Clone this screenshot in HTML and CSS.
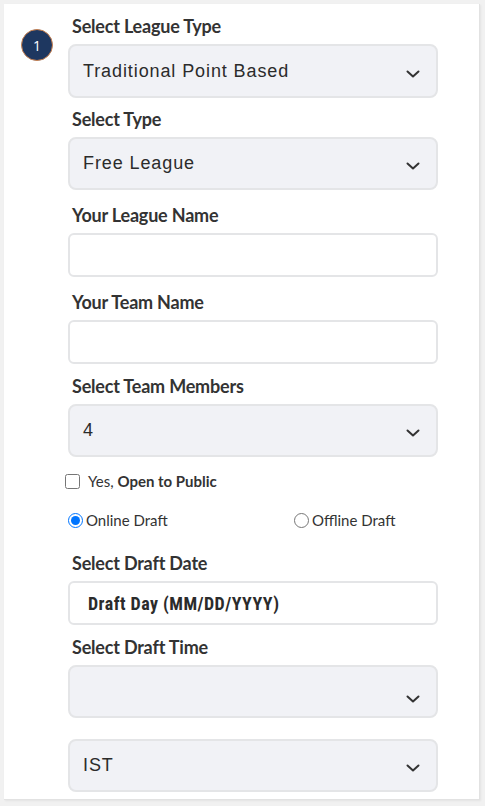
FILE: index.html
```html
<!DOCTYPE html>
<html lang="en">
<head>
<meta charset="utf-8">
<title>Create League</title>
<link rel="stylesheet" href="styles.css">
</head>
<body>
<div class="card">
  <div class="step">
    <div class="badge">1</div>
  </div>
  <form class="form">
    <div class="group tight">
      <label class="label">Select League Type</label>
      <div class="select tall"><span class="value">Traditional Point Based</span><svg class="chev" viewBox="0 0 14 8"><path d="M1.5 1.5 L7 6.5 L12.5 1.5"/></svg></div>
    </div>
    <div class="group loose">
      <label class="label">Select Type</label>
      <div class="select"><span class="value">Free League</span><svg class="chev" viewBox="0 0 14 8"><path d="M1.5 1.5 L7 6.5 L12.5 1.5"/></svg></div>
    </div>
    <div class="group loose">
      <label class="label">Your League Name</label>
      <div class="input"></div>
    </div>
    <div class="group snug">
      <label class="label">Your Team Name</label>
      <div class="input"></div>
    </div>
    <div class="group">
      <label class="label">Select Team Members</label>
      <div class="select"><span class="value">4</span><svg class="chev" viewBox="0 0 14 8"><path d="M1.5 1.5 L7 6.5 L12.5 1.5"/></svg></div>
    </div>
    <div class="check-row">
      <input type="checkbox" class="box">
      <span class="check-text">Yes, <b>Open to Public</b></span>
    </div>
    <div class="radio-row">
      <div class="radio"><input type="radio" name="draft" checked><span>Online Draft</span></div>
      <div class="radio"><input type="radio" name="draft"><span>Offline Draft</span></div>
    </div>
    <div class="group snug">
      <label class="label">Select Draft Date</label>
      <div class="input date"><span class="date-text">Draft Day (MM/DD/YYYY)</span></div>
    </div>
    <div class="group">
      <label class="label">Select Draft Time</label>
      <div class="select empty"><span class="value"></span><svg class="chev" viewBox="0 0 14 8"><path d="M1.5 1.5 L7 6.5 L12.5 1.5"/></svg></div>
    </div>
    <div class="group tz">
      <div class="select"><span class="value">IST</span><svg class="chev" viewBox="0 0 14 8"><path d="M1.5 1.5 L7 6.5 L12.5 1.5"/></svg></div>
    </div>
  </form>
</div>
</body>
</html>
```
FILE: styles.css
```css
* { box-sizing: border-box; }
html, body { margin: 0; padding: 0; }
body {
  background: #f1f1f1;
  font-family: Lato, "Liberation Sans", sans-serif;
  color: #333;
  height: 806px;
  overflow: hidden;
}
.card {
  margin: 4px 5px 0 4px;
  width: 476px;
  height: 796px;
  background: #fff;
  border-right: 1px solid #e2e2e2;
  border-bottom: 1px solid #e2e2e2;
  box-shadow: 1px 1px 2px rgba(0,0,0,0.06);
  display: flex;
  align-items: flex-start;
  padding-top: 11px;
}
.step {
  width: 64px;
  flex: none;
  padding: 14px 0 0 17px;
}
.badge {
  width: 32px;
  height: 32px;
  border-radius: 50%;
  background: #1e3760;
  border: 1.5px solid #c98150;
  color: #fff;
  font-family: "Open Sans", "Liberation Sans", sans-serif;
  font-size: 14px;
  display: flex;
  align-items: center;
  justify-content: center;
}
.form {
  width: 370px;
  flex: none;
  display: flex;
  flex-direction: column;
}
.form > * { flex: none; }
.group { margin-bottom: 12px; }
.group.tight { margin-bottom: 10px; }
.group.loose { margin-bottom: 14px; }
.group.snug { margin-bottom: 11px; }
.label {
  display: block;
  font-weight: 700;
  font-size: 18px;
  line-height: 22px;
  color: #333;
  margin-bottom: 7px;
  padding-left: 4px;
  letter-spacing: -0.2px;
}
.select {
  height: 53px;
  border: 2px solid #e4e5e7;
  border-radius: 8px;
  background: #f1f2f6;
  display: flex;
  align-items: center;
  padding: 0 16px 0 13px;
}
.select.tall { height: 54px; }
.value {
  flex: 1;
  font-family: "Liberation Sans", Arial, sans-serif;
  font-size: 18px;
  letter-spacing: 0.9px;
  color: #2b2b2b;
}
.chev {
  width: 14px;
  height: 8px;
  margin-top: 5px;
  fill: none;
  stroke: #333;
  stroke-width: 2;
  stroke-linecap: round;
  stroke-linejoin: round;
}
.empty .chev { margin-top: 14px; }
.input {
  height: 44px;
  border: 2px solid #e4e5e7;
  border-radius: 6px;
  background: #fff;
  display: flex;
  align-items: center;
}
.date { padding-left: 18px; }
.date-text {
  font-family: "Liberation Sans Narrow", "Roboto Condensed", Roboto, sans-serif;
  font-stretch: condensed;
  font-weight: 700;
  font-size: 18px;
  letter-spacing: 0.45px;
  color: #2b2b2b;
}
.check-row {
  display: flex;
  align-items: center;
  margin: 0 0 0 -3px;
  height: 24px;
}
.box {
  width: 15px;
  height: 15px;
  margin: 0 8px 0 0;
}
.check-text { font-size: 15px; color: #333; }
.check-text b { font-weight: 700; }
.radio-row {
  display: grid;
  grid-template-columns: 226px 1fr;
  margin: 16px 0 21px 0;
  height: 22px;
  align-items: center;
}
.radio {
  display: flex;
  align-items: center;
  font-size: 15px;
  color: #333;
}
.radio input {
  width: 15px;
  height: 15px;
  margin: 0 3px 0 0;
}
.tz { margin-top: 9px; }
```
